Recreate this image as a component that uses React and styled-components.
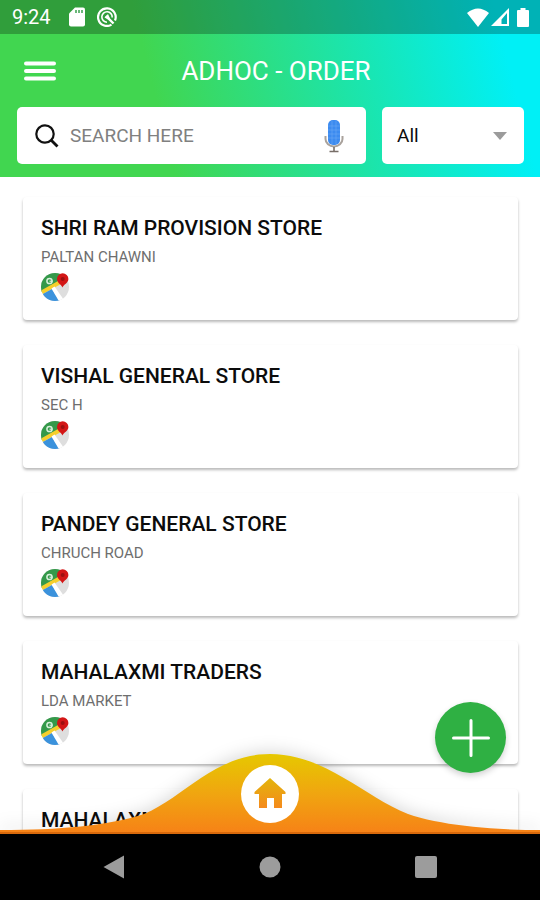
import React from 'react';
import styled, { createGlobalStyle } from 'styled-components';

const COLORS = {
  green: '#2fb043',
  text: '#0c0c0c',
  muted: '#6e6e6e',
  nav: '#9c9c9c',
};

const STORES = [
  { id: 1, name: 'SHRI RAM PROVISION STORE', area: 'PALTAN CHAWNI' },
  { id: 2, name: 'VISHAL GENERAL STORE', area: 'SEC H' },
  { id: 3, name: 'PANDEY GENERAL STORE', area: 'CHRUCH ROAD' },
  { id: 4, name: 'MAHALAXMI TRADERS', area: 'LDA MARKET' },
  { id: 5, name: 'MAHALAXMI' },
];

const SdCardIcon = () => (
  <svg width="16" height="20" viewBox="0 0 16 20">
    <path
      d="M6 0.5h8a2 2 0 0 1 2 2v15a2 2 0 0 1-2 2H2a2 2 0 0 1-2-2V6.500z"
      fill="#fff"
    />
    <path d="M7 3v3M10 3v3M13 3v3" stroke="#2c9a40" strokeWidth="1.400" />
  </svg>
);

const SyncIcon = () => (
  <svg width="20" height="20" viewBox="0 0 20 20" fill="none" stroke="#fff">
    <path d="M14.500 17.600A8.800 8.800 0 1 1 18 13.500" strokeWidth="2.200" />
    <path d="M10 15.200A5.200 5.200 0 1 1 15.200 10.500" strokeWidth="1.600" />
    <path d="M9 9l7.500 7.500" strokeWidth="2.400" />
    <path d="M7.500 10.500l3.500-3.500 2 4.500-2 1z" fill="#fff" stroke="none" />
  </svg>
);

const WifiIcon = () => (
  <svg width="22" height="19" viewBox="0 0 22 19">
    <path d="M0 5Q11-4 22 5L11 19z" fill="#fff" />
  </svg>
);

const SignalIcon = () => (
  <svg width="18" height="18" viewBox="0 0 18 18">
    <path
      d="M18 0v18H0zM16 5l-5.500 6.500v4.500h5.500z"
      fill="#fff"
      fillRule="evenodd"
    />
  </svg>
);

const BatteryIcon = () => (
  <svg width="12" height="19" viewBox="0 0 12 19">
    <path
      d="M3.500 0h5v2H11a1 1 0 0 1 1 1v15a1 1 0 0 1-1 1H1a1 1 0 0 1-1-1V3a1 1 0 0 1 1-1h2.500z"
      fill="#fff"
    />
  </svg>
);

const MenuIcon = () => (
  <svg width="32" height="20" viewBox="0 0 32 20">
    <path
      d="M2 2.500h28M2 10h28M2 17.500h28"
      stroke="#fff"
      strokeWidth="4"
      strokeLinecap="round"
    />
  </svg>
);

const SearchIcon = () => (
  <svg width="24" height="24" viewBox="0 0 24 24" fill="none" stroke="#111">
    <circle cx="10" cy="10" r="8.700" strokeWidth="2.200" />
    <path d="M16 16l6.500 6.500" strokeWidth="2.800" />
  </svg>
);

const MicIcon = () => (
  <svg width="20" height="34" viewBox="0 0 20 34">
    <path
      d="M1.500 17v3a8.500 7.500 0 0 0 17 0v-3"
      fill="none"
      stroke="#a9a29c"
      strokeWidth="2"
    />
    <path d="M10 28v4M5.500 32.500h9" stroke="#776e68" strokeWidth="1.600" />
    <rect x="4" y="1" width="12" height="25" rx="5" fill="#3c8bf0" />
    <path
      d="M4 7h12M4 11h12M4 15h12M4 19h12M8 2v23M12 2v23"
      stroke="#69a7f5"
      strokeWidth="0.600"
    />
  </svg>
);

const MapIcon = () => (
  <svg width="30" height="30" viewBox="0 0 30 30">
    <defs>
      <clipPath id="map-disc">
        <circle cx="14" cy="14" r="14" />
      </clipPath>
    </defs>
    <g clipPath="url(#map-disc)">
      <rect width="30" height="30" fill="#dedede" />
      <path d="M0 0h24L17 10 0 20z" fill="#34994a" />
      <path d="M0 17.500L17 8l3 3L0 22z" fill="#f6cf2c" />
      <path d="M0 22l11-6L20 30H0z" fill="#3b92dc" />
      <path d="M10.500 15.500l3-2L23 27l-4 3z" fill="#fff" />
    </g>
    <circle
      cx="8.500"
      cy="8"
      r="2.600"
      fill="none"
      stroke="#d9f1dc"
      strokeWidth="1.500"
    />
    <path d="M8.500 8.200h3" stroke="#d9f1dc" strokeWidth="1.200" />
    <path
      d="M21.500 14.500C20.500 11.500 16 10 16 6a5.700 5.700 0 0 1 11.400 0c0 4-4.900 5.500-5.900 8.500z"
      fill="#d31616"
    />
    <circle cx="21.700" cy="6" r="2" fill="#9d1010" />
  </svg>
);

const HomeIcon = () => (
  <svg width="32" height="32" viewBox="0 0 32 32">
    <defs>
      <linearGradient id="home-fill" x1="0" y1="0" x2="0" y2="1">
        <stop offset="0" stopColor="#e3b50c" />
        <stop offset="1" stopColor="#f58a1c" />
      </linearGradient>
    </defs>
    <path
      d="M16 0L31.500 14v2H28v14h-8V20h-7v10H5V16H0.500v-2z"
      fill="url(#home-fill)"
    />
  </svg>
);

const WaveShape = () => (
  <Wave viewBox="0 0 540 80" preserveAspectRatio="none" aria-hidden="true">
    <defs>
      <linearGradient id="wave-fill" x1="0" y1="0" x2="0" y2="1">
        <stop offset="0" stopColor="#e6c800" />
        <stop offset="0.500" stopColor="#f0a510" />
        <stop offset="1" stopColor="#f78117" />
      </linearGradient>
    </defs>
    <path
      d="M0 76C60 76 107 72 144 60C183 44 215 0 270 0C325 0 365 43 408 60C440 71 490 76 540 76V80H0z"
      fill="url(#wave-fill)"
    />
    <path d="M0 79h540" stroke="#d8690c" strokeWidth="2" />
  </Wave>
);

const StoreCard = ({ name, area }) => (
  <Card>
    <StoreName>{name}</StoreName>
    {area && <StoreArea>{area}</StoreArea>}
    <MapLink href="#map" aria-label={`Map of ${name}`}>
      <MapIcon />
    </MapLink>
  </Card>
);

const App = () => (
  <Screen>
    <GlobalStyle />
    <Header>
      <StatusBar>
        <Clock>9:24</Clock>
        <StatusGroup gap={12}>
          <SdCardIcon />
          <SyncIcon />
        </StatusGroup>
        <StatusGroup gap={2} pushed>
          <WifiIcon />
          <SignalIcon />
          <BatteryWrapper>
            <BatteryIcon />
          </BatteryWrapper>
        </StatusGroup>
      </StatusBar>
      <Toolbar>
        <IconButton aria-label="Menu">
          <MenuIcon />
        </IconButton>
        <Title>ADHOC - ORDER</Title>
      </Toolbar>
      <Filters>
        <SearchBox>
          <SearchLabel htmlFor="search" aria-label="Search">
            <SearchIcon />
          </SearchLabel>
          <SearchInput id="search" type="text" placeholder="SEARCH HERE" />
          <IconButton aria-label="Voice search">
            <MicIcon />
          </IconButton>
        </SearchBox>
        <SelectBox>
          <Select aria-label="Filter" defaultValue="All">
            <option>All</option>
          </Select>
          <Caret viewBox="0 0 14 8">
            <path d="M0 0h14L7 8z" fill="#9b9b9b" />
          </Caret>
        </SelectBox>
      </Filters>
    </Header>

    <Content>
      <StoreList>
        {STORES.map(({ id, name, area }) => (
          <StoreCard key={id} name={name} area={area} />
        ))}
      </StoreList>
      <WaveShape />
      <HomeButton aria-label="Home">
        <HomeIcon />
      </HomeButton>
      <AddButton aria-label="Add order">
        <svg width="38" height="38" viewBox="0 0 38 38">
          <path
            d="M19 1.500v35M1.500 19h35"
            stroke="#fff"
            strokeWidth="3"
            strokeLinecap="round"
          />
        </svg>
      </AddButton>
    </Content>

    <NavBar>
      <NavButton aria-label="Back">
        <svg width="22" height="24" viewBox="0 0 22 24">
          <path d="M21 0.500v23L0.500 12z" fill={COLORS.nav} />
        </svg>
      </NavButton>
      <NavButton aria-label="Home screen">
        <svg width="22" height="22" viewBox="0 0 22 22">
          <circle cx="11" cy="11" r="10.500" fill={COLORS.nav} />
        </svg>
      </NavButton>
      <NavButton aria-label="Recent apps">
        <svg width="22" height="22" viewBox="0 0 22 22">
          <rect width="22" height="22" rx="2" fill={COLORS.nav} />
        </svg>
      </NavButton>
    </NavBar>
  </Screen>
);

const GlobalStyle = createGlobalStyle`
  * {
    box-sizing: border-box;
  }

  body {
    margin: 0;
    background: #fff;
    font-family: Roboto, 'Liberation Sans', sans-serif;
  }

  button {
    display: flex;
    align-items: center;
    justify-content: center;
    padding: 0;
    border: 0;
    background: none;
    cursor: pointer;
  }

  svg {
    display: block;
    flex-shrink: 0;
  }
`;

const Screen = styled.div`
  display: flex;
  flex-direction: column;
  height: 100vh;
  overflow: hidden;
`;

const Header = styled.header`
  background: linear-gradient(76deg, #41d650 30%, #18e6b4 68%, #00f0f6 92%);
`;

const StatusBar = styled.div`
  display: flex;
  align-items: center;
  height: 34px;
  padding: 0 11px 0 12px;
  background: rgba(0, 0, 0, 0.26);
`;

const Clock = styled.span`
  margin-right: 18px;
  font-size: 20px;
  line-height: 24px;
  color: #fff;
`;

const StatusGroup = styled.div.withConfig({
  shouldForwardProp: prop => !['gap', 'pushed'].includes(prop),
})`
  display: flex;
  align-items: center;
  gap: ${props => props.gap}px;
  margin-left: ${props => (props.pushed ? 'auto' : 0)};
`;

const BatteryWrapper = styled.div`
  padding-left: 6px;
`;

const Toolbar = styled.div`
  display: flex;
  align-items: center;
  height: 73px;
  padding: 0 44px 0 24px;
`;

const IconButton = styled.button`
  flex-shrink: 0;
`;

const Title = styled.h1`
  flex: 1;
  margin: 0;
  font-size: 26px;
  font-weight: 400;
  line-height: 32px;
  text-align: center;
  color: #fff;
`;

const Filters = styled.div`
  display: grid;
  grid-template-columns: minmax(0, 349fr) minmax(0, 142fr);
  gap: 16px;
  padding: 0 16px 13px 17px;
`;

const FieldBox = styled.div`
  display: flex;
  align-items: center;
  height: 57px;
  border-radius: 5px;
  background: #fff;
`;

const SearchBox = styled(FieldBox)`
  padding: 0 22px 0 18px;
`;

const SearchLabel = styled.label`
  flex-shrink: 0;
`;

const SearchInput = styled.input`
  flex: 1;
  min-width: 0;
  padding: 0 11px;
  border: 0;
  outline: 0;
  background: none;
  font: 400 19px/24px Roboto, 'Liberation Sans', sans-serif;
  color: ${COLORS.text};

  &::placeholder {
    color: #808080;
    opacity: 1;
  }
`;

const SelectBox = styled(FieldBox)`
  position: relative;
`;

const Select = styled.select`
  width: 100%;
  height: 100%;
  padding: 0 32px 0 15px;
  border: 0;
  outline: 0;
  appearance: none;
  background: none;
  font: 400 19px/24px Roboto, 'Liberation Sans', sans-serif;
  color: ${COLORS.text};
`;

const Caret = styled.svg`
  position: absolute;
  right: 17px;
  width: 14px;
  height: 8px;
  pointer-events: none;
`;

const Content = styled.main`
  position: relative;
  flex: 1;
  min-height: 0;
  overflow: hidden;
`;

const StoreList = styled.ul`
  display: flex;
  flex-direction: column;
  gap: 25px;
  margin: 0;
  padding: 20px 22px 20px 23px;
  list-style: none;
`;

const Card = styled.li`
  flex-shrink: 0;
  padding: 17px 18px;
  border-radius: 4px;
  background: #fff;
  box-shadow: 0 2px 3px rgba(0, 0, 0, 0.28);
`;

const StoreName = styled.h2`
  margin: 0;
  font-size: 21px;
  font-weight: 500;
  line-height: 28px;
  color: ${COLORS.text};
`;

const StoreArea = styled.p`
  margin: 5px 0 6px;
  font-size: 15px;
  line-height: 20px;
  color: ${COLORS.muted};
`;

const MapLink = styled.a`
  display: block;
  width: 30px;
`;

const Wave = styled.svg`
  position: absolute;
  left: 0;
  bottom: 0;
  width: 100%;
  height: 80px;
  overflow: visible;
  filter: drop-shadow(0 -3px 8px rgba(0, 0, 0, 0.14));
`;

const HomeButton = styled.button`
  position: absolute;
  left: 50%;
  bottom: 11px;
  width: 58px;
  height: 58px;
  border-radius: 50%;
  background: #fff;
  transform: translateX(-50%);
`;

const AddButton = styled.button`
  position: absolute;
  right: 34px;
  bottom: 61px;
  width: 71px;
  height: 71px;
  border-radius: 50%;
  background: ${COLORS.green};
  box-shadow: 0 3px 6px rgba(0, 0, 0, 0.18);
`;

const NavBar = styled.nav`
  display: flex;
  flex-shrink: 0;
  height: 66px;
  padding: 0 36px;
  background: #000;
`;

const NavButton = styled.button`
  flex: 1;
`;

export default App;
